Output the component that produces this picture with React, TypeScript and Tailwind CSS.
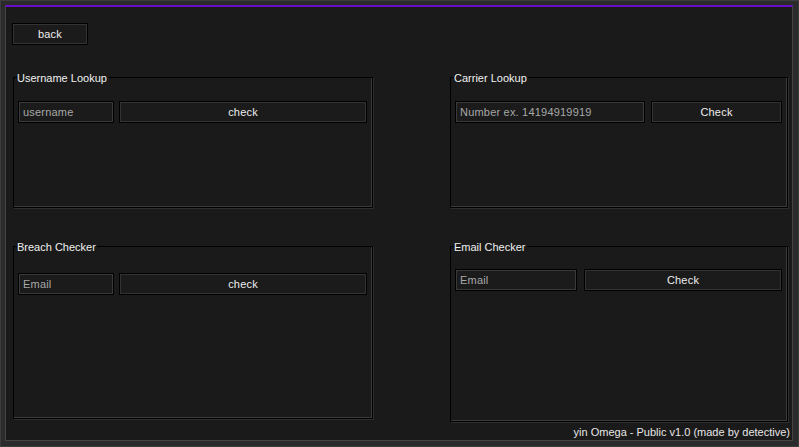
import type { ReactNode } from "react";

const font = { fontFamily: '"Liberation Sans", Arial, sans-serif' };

function Field({ placeholder, className }: { placeholder: string; className: string }) {
  return (
    <div
      className={`flex h-[22px] items-center border border-black bg-[#1b1b1b] px-[4px] text-[11px] tracking-[0.2px] text-[#a8a8a8] shadow-[inset_0_0_0_1px_#3a3a3a] ${className}`}
    >
      {placeholder}
    </div>
  );
}

function Btn({ label, className }: { label: string; className: string }) {
  return (
    <div
      className={`flex h-[22px] items-center justify-center border border-black bg-[#1b1b1b] text-[11px] tracking-[0.2px] text-[#eeeeee] shadow-[inset_0_0_0_1px_#333333] ${className}`}
    >
      {label}
    </div>
  );
}

function Group({ title, className, children }: { title: string; className: string; children: ReactNode }) {
  return (
    <div className={`relative border border-black shadow-[inset_-1px_-1px_0_#3a3a3a,1px_1px_0_#2e2e2e] ${className}`}>
      <span className="absolute -top-[7px] left-[3px] bg-[#1a1a1a] pr-[1px] text-[11px] leading-[14px] text-[#f0f0f0]">
        {title}
      </span>
      {children}
    </div>
  );
}

export default function App() {
  return (
    <div style={font} className="h-[447px] w-[799px] border border-[#3c3c3c] bg-[#2b2b2b] p-[4px]">
      <div className="flex h-[436px] w-[788px] flex-col border-t-[2px] border-l border-r border-b border-t-[#6a0dc8] border-l-[#444] border-r-[#444] border-b-[#444] bg-[#1a1a1a]">
        <div className="pl-[6px] pt-[16px]">
          <Btn label="back" className="w-[76px]" />
        </div>

        <div className="flex pl-[7px] pt-[32px]">
          <div className="flex w-[360px] flex-col gap-[38px]">
            <Group title="Username Lookup" className="h-[131px] w-[360px]">
              <div className="flex gap-[5px] pl-[4px] pt-[23px]">
                <Field placeholder="username" className="w-[96px]" />
                <Btn label="check" className="w-[248px]" />
              </div>
            </Group>
            <Group title="Breach Checker" className="h-[173px] w-[360px]">
              <div className="flex gap-[5px] pl-[4px] pt-[26px]">
                <Field placeholder="Email" className="w-[96px]" />
                <Btn label="check" className="w-[248px]" />
              </div>
            </Group>
          </div>

          <div className="ml-[77px] flex w-[338px] flex-col gap-[38px]">
            <Group title="Carrier Lookup" className="h-[131px] w-[338px]">
              <div className="flex gap-[6px] pl-[4px] pt-[23px]">
                <Field placeholder="Number ex. 14194919919" className="w-[190px]" />
                <Btn label="Check" className="w-[131px]" />
              </div>
            </Group>
            <Group title="Email Checker" className="h-[176px] w-[338px]">
              <div className="flex gap-[7px] pl-[4px] pt-[22px]">
                <Field placeholder="Email" className="w-[122px]" />
                <Btn label="Check" className="w-[198px]" />
              </div>
            </Group>
          </div>
        </div>

        <div className="mt-auto flex justify-end pr-[2px] text-[11px] leading-[16px] text-[#e6e6e6]">
          yin Omega - Public v1.0 (made by detective)
        </div>
      </div>
    </div>
  );
}
